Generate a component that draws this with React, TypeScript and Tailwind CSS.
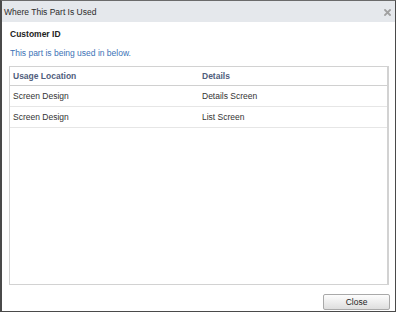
import React from "react";

export default function App() {
  const rows = [
    { loc: "Screen Design", det: "Details Screen" },
    { loc: "Screen Design", det: "List Screen" },
  ];
  return (
    <div
      className="w-[397px] h-[314px] bg-white"
      style={{ fontFamily: '"Liberation Sans", Arial, sans-serif' }}
    >
      <div className="w-[396px] h-[312px] border-t border-l-2 border-r border-b border-t-[#6b6b6b] border-l-[#4a4a4a] border-r-[#4a4a4a] border-b-[#4a4a4a] flex flex-col bg-white">
        <div className="h-[21px] bg-[#e5e8ec] flex items-center justify-between pl-[2px] pr-[4px] shrink-0">
          <span className="text-[8.5px] leading-[10px] text-[#2b2b2b]">Where This Part Is Used</span>
          <svg width="7" height="7" viewBox="0 0 7 7" className="mt-[1px]">
            <path d="M1 1 L6 6 M6 1 L1 6" stroke="#a0a0a0" strokeWidth="1.8" strokeLinecap="square" />
          </svg>
        </div>
        <div className="mt-[7px] ml-[8px] text-[8.5px] leading-[10px] font-bold text-[#222]">Customer ID</div>
        <div className="mt-[9px] ml-[8px] text-[8.5px] leading-[10px] text-[#3b72b6]">This part is being used in below.</div>
        <div className="mt-[8px] ml-[7px] w-[380px] h-[219px] border border-r-2 border-[#d2d2d2] flex flex-col shrink-0">
          <div className="h-[19px] border-b border-[#d0d0d0] flex items-center text-[8.5px] font-bold text-[#4f5d7c]">
            <div className="w-[189px] pl-[3px]">Usage Location</div>
            <div className="pl-[3px]">Details</div>
          </div>
          {rows.map((r, i) => (
            <div key={i} className="h-[21px] border-b border-[#e6e6e6] flex items-center text-[8.5px] text-[#333]">
              <div className="w-[189px] pl-[3px]">{r.loc}</div>
              <div className="pl-[3px]">{r.det}</div>
            </div>
          ))}
        </div>
        <div className="mt-[9px] flex justify-end pr-[5px]">
          <button className="w-[67px] h-[16px] border border-[#a9a9a9] rounded-[2px] bg-gradient-to-b from-[#fdfdfd] to-[#dedede] text-[8.5px] leading-[10px] text-[#222] flex items-center justify-center">
            Close
          </button>
        </div>
      </div>
    </div>
  );
}
